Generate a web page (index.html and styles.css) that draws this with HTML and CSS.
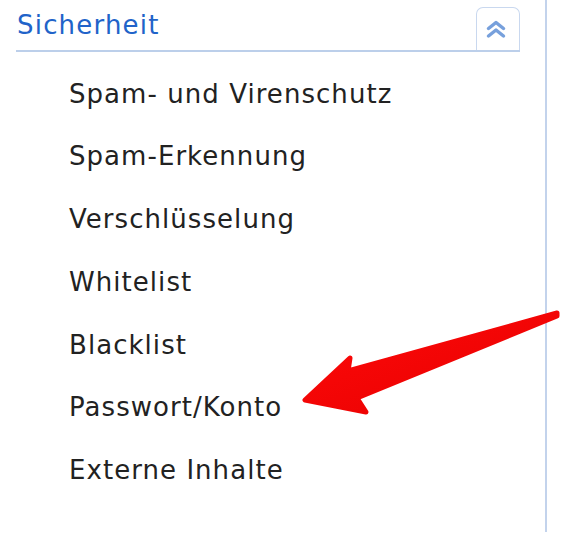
FILE: index.html
```html
<!DOCTYPE html>
<html lang="de">
<head>
    <meta charset="UTF-8">
    <title>Sicherheit</title>
    <link rel="stylesheet" href="styles.css">
</head>
<body>

    <!-- Sidebar Section -->
    <div class="sidebar">
        <div class="section-head">
            <h2>Sicherheit</h2>
            <button class="collapse-btn" aria-label="Einklappen">
                <svg width="44" height="43" viewBox="476 7 44 43">
                    <polyline points="488.5,28.5 496,22.5 503.5,28.5" />
                    <polyline points="488.5,36 496,30 503.5,36" />
                </svg>
            </button>
        </div>

        <ul class="menu">
            <li>Spam- und Virenschutz</li>
            <li>Spam-Erkennung</li>
            <li>Verschlüsselung</li>
            <li>Whitelist</li>
            <li>Blacklist</li>
            <li>Passwort/Konto</li>
            <li>Externe Inhalte</li>
        </ul>

        <!-- Red pointer arrow -->
        <svg class="pointer" width="573" height="533" viewBox="0 0 573 533">
            <defs>
                <linearGradient id="red" x1="0" y1="0" x2="1" y2="1">
                    <stop offset="0" stop-color="#ff0a0a" />
                    <stop offset="1" stop-color="#e60000" />
                </linearGradient>
            </defs>
            <polygon points="557,313 348,371 350,358 305,400 366,412 357,398 557,316" />
        </svg>
    </div>

</body>
</html>
```

FILE: styles.css
```css
/* General Reset */
* {
    margin: 0;
    padding: 0;
    box-sizing: border-box;
}

body {
    font-family: 'DejaVu Sans', Verdana, sans-serif;
    background-color: #fff;
    color: #222;
}

/* Sidebar */
.sidebar {
    position: relative;
    width: 547px;
    height: 532px;
    border-right: 2px solid #c3d3ec;
}

.section-head {
    display: flex;
    justify-content: space-between;
    margin-left: 16px;
    width: 504px;
    padding-top: 7px;
    border-bottom: 2px solid #bccfea;
}

.section-head h2 {
    font-size: 26px;
    font-weight: normal;
    line-height: 37px;
    color: #2163c9;
    padding-left: 1px;
    letter-spacing: 1.2px;
}

.collapse-btn {
    width: 44px;
    height: 43px;
    background: #fff;
    border: 1px solid #c9d8ef;
    border-bottom: none;
    border-radius: 7px 7px 0 0;
}

.collapse-btn svg {
    display: block;
    margin: -1px 0 0 -1px;
}

.collapse-btn polyline {
    fill: none;
    stroke: #5f8fd6;
    stroke-width: 3.5;
    stroke-linecap: round;
    stroke-linejoin: round;
    opacity: 0.85;
}

/* Menu */
.menu {
    list-style: none;
    margin-top: 10.5px;
    padding-left: 69px;
}

.menu li {
    font-size: 26px;
    line-height: 62.8px;
    letter-spacing: 1.05px;
    color: #222;
}

/* Arrow */
.pointer {
    position: absolute;
    top: 0;
    left: 0;
    pointer-events: none;
}

.pointer polygon {
    fill: url(#red);
    stroke: url(#red);
    stroke-width: 5;
    stroke-linejoin: round;
}
```
